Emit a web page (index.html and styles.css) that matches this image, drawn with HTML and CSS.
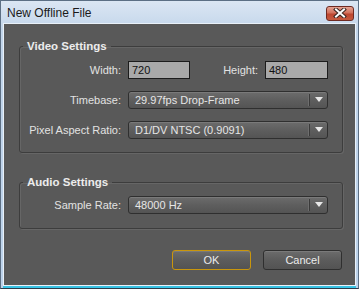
FILE: index.html
```html
<!DOCTYPE html>
<html lang="en">
<head>
  <meta charset="UTF-8">
  <title>New Offline File</title>
  <link rel="stylesheet" href="styles.css">
</head>
<body>
  <div class="window">
    <div class="titlebar">
      <div class="title">New Offline File</div>
      <button class="close-button" aria-label="Close">
        <svg width="14" height="10" viewBox="0 0 14 10">
          <path d="M3 1.5 L11 8.5 M11 1.5 L3 8.5" stroke="#3a2520" stroke-width="4" stroke-linecap="square"/>
          <path d="M3 1.5 L11 8.5 M11 1.5 L3 8.5" stroke="#ffffff" stroke-width="2" stroke-linecap="square"/>
        </svg>
      </button>
    </div>

    <div class="client">
      <fieldset class="group">
        <legend>Video Settings</legend>
        <div class="grid">
          <label>Width:</label>
          <div class="field">720</div>
          <label>Height:</label>
          <div class="field">480</div>

          <label>Timebase:</label>
          <div class="select wide">
            <span class="value">29.97fps Drop-Frame</span>
            <span class="arrow"></span>
          </div>

          <label>Pixel Aspect Ratio:</label>
          <div class="select wide">
            <span class="value">D1/DV NTSC (0.9091)</span>
            <span class="arrow"></span>
          </div>
        </div>
      </fieldset>

      <fieldset class="group audio">
        <legend>Audio Settings</legend>
        <div class="grid">
          <label>Sample Rate:</label>
          <div class="select wide">
            <span class="value">48000 Hz</span>
            <span class="arrow"></span>
          </div>
        </div>
      </fieldset>

      <div class="buttons">
        <button class="button default">OK</button>
        <button class="button">Cancel</button>
      </div>
    </div>
  </div>
</body>
</html>
```

FILE: styles.css
```css
* {
  box-sizing: border-box;
}

body {
  margin: 0;
  background: #ffffff;
  font-family: "Liberation Sans", Arial, sans-serif;
  font-size: 11px;
}

.window {
  width: 359px;
  height: 289px;
  border: 1px solid #5c6f84;
  background: linear-gradient(#dbe6f3, #c2d5ea 30px, #bcd2ea);
  display: flex;
  flex-direction: column;
  border-bottom-color: #2e3d4c;
}

.titlebar {
  height: 22px;
  display: flex;
  align-items: center;
  justify-content: space-between;
  padding: 0 4px 0 6px;
}

.title {
  font-size: 12px;
  color: #1a1a1a;
  padding-top: 1px;
}

.close-button {
  width: 28px;
  height: 15px;
  margin-top: 2px;
  border: 1px solid #6e2a22;
  border-radius: 3px;
  background: linear-gradient(#e6a493, #d2715c 45%, #bd4630 55%, #c55a3e);
  display: flex;
  align-items: center;
  justify-content: center;
  padding: 0;
}

.client {
  flex: 1;
  margin: 0 2px 2px 2px;
  background: #595959;
  border: 1px solid #e9f1f9;
  padding: 15px 12px 0 15px;
  display: flex;
  flex-direction: column;
  box-shadow: 0 2px 0 #38c4e6;
}

.group {
  margin: 0;
  padding: 8px 14px 13px 0;
  border: 1px solid #3d3d3d;
  border-radius: 3px;
  box-shadow: inset 1px 1px 0 #666666, 1px 1px 0 #666666;
}

.group legend {
  margin-left: 3px;
  padding: 0 4px;
  font-size: 11.5px;
  font-weight: bold;
  line-height: 14px;
  color: #ececec;
}

.audio {
  margin-top: 22px;
  padding-top: 7px;
  padding-bottom: 14px;
}

.grid {
  display: grid;
  grid-template-columns: 101px 62px 1fr 63px;
  column-gap: 7px;
  row-gap: 12px;
  align-items: center;
}

.grid label {
  text-align: right;
  color: #e2e2e2;
}

.field {
  height: 18px;
  background: #a9a9a9;
  border: 1px solid #1c1c1c;
  color: #111111;
  padding: 2px 3px;
  line-height: 13px;
  font-size: 11px;
}

.select {
  height: 18px;
  display: flex;
  align-items: center;
  border: 1px solid #2f2f2f;
  border-radius: 3px;
  background: linear-gradient(#6c6c6c, #5e5e5e 50%, #545454);
  box-shadow: inset 0 1px 0 #7a7a7a;
  color: #e6e6e6;
}

.wide {
  grid-column: 2 / -1;
}

.select .value {
  flex: 1;
  padding-left: 6px;
}

.select .arrow {
  width: 18px;
  height: 12px;
  border-left: 1px solid #3a3a3a;
  box-shadow: -1px 0 0 #6e6e6e;
  position: relative;
}

.select .arrow::after {
  content: "";
  position: absolute;
  left: 5px;
  top: 3px;
  border-left: 4px solid transparent;
  border-right: 4px solid transparent;
  border-top: 5px solid #e8e8e8;
}

.buttons {
  display: flex;
  justify-content: flex-end;
  gap: 12px;
  margin-top: 21px;
  padding-right: 1px;
}

.button {
  width: 79px;
  height: 20px;
  border: 1px solid #2f2f2f;
  border-radius: 3px;
  background: linear-gradient(#6c6c6c, #5c5c5c 50%, #535353);
  box-shadow: inset 0 1px 0 #7a7a7a;
  color: #ececec;
  font-family: "Liberation Sans", Arial, sans-serif;
  font-size: 11px;
  padding: 0;
}

.button.default {
  border-color: #c9960c;
}
```
